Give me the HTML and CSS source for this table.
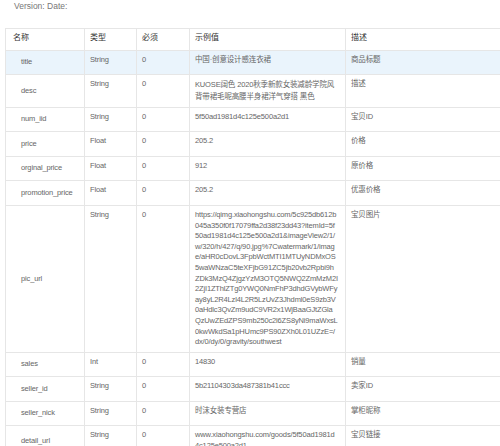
FILE: index.html
```html
<!DOCTYPE html>
<html lang="zh">
<head>
<meta charset="utf-8">
<title>API</title>
<link rel="stylesheet" href="styles.css">
</head>
<body>
<div class="version">Version: Date:</div>
<table class="api">
  <colgroup>
    <col class="c1"><col class="c2"><col class="c3"><col class="c4"><col class="c5">
  </colgroup>
  <thead>
    <tr><th class="first">名称</th><th>类型</th><th>必须</th><th>示例值</th><th>描述</th></tr>
  </thead>
  <tbody>
    <tr class="hl"><td class="name">title</td><td>String</td><td>0</td><td>中国·创意设计感连衣裙</td><td>商品标题</td></tr>
    <tr><td class="name">desc</td><td>String</td><td>0</td><td class="cjk">KUOSE阔色 2020秋季新款女装减龄学院风背带裙毛呢高腰半身裙洋气穿搭 黑色</td><td>描述</td></tr>
    <tr><td class="name">num_iid</td><td>String</td><td>0</td><td>5f50ad1981d4c125e500a2d1</td><td>宝贝ID</td></tr>
    <tr><td class="name">price</td><td>Float</td><td>0</td><td>205.2</td><td>价格</td></tr>
    <tr><td class="name">orginal_price</td><td>Float</td><td>0</td><td>912</td><td>原价格</td></tr>
    <tr><td class="name">promotion_price</td><td>Float</td><td>0</td><td>205.2</td><td>优惠价格</td></tr>
    <tr><td class="name">pic_url</td><td>String</td><td>0</td><td class="brk">https://qimg.xiaohongshu.com/5c925db612b045a350f0f17079ffa2d38f23dd43?itemId=5f50ad1981d4c125e500a2d1&amp;imageView2/1/w/320/h/427/q/90.jpg%7Cwatermark/1/image/aHR0cDovL3FpbWctMTI1MTUyNDMxOS5waWNzaC5teXFjbG91ZC5jb20vb2Rpbi9hZDk3MzQ4ZjgzYzM3OTQ5NWQ2ZmMzM2I2ZjI1ZThlZTg0YWQ0NmFhP3dhdGVybWFyay8yL2R4Lzl4L2R5LzUvZ3Jhdml0eS9zb3V0aHdlc3QvZm9udC9VR2x1WjBaaGJtZGlaQzUwZEdZPS9mb250c2l6ZS8yNi9maWxsL0kwWkdSa1pHUmc9PS90ZXh0L01UZzE=/dx/0/dy/0/gravity/southwest</td><td>宝贝图片</td></tr>
    <tr><td class="name">sales</td><td>Int</td><td>0</td><td>14830</td><td>销量</td></tr>
    <tr><td class="name">seller_id</td><td>String</td><td>0</td><td>5b21104303da487381b41ccc</td><td>卖家ID</td></tr>
    <tr><td class="name">seller_nick</td><td>String</td><td>0</td><td>时沫女装专营店</td><td>掌柜昵称</td></tr>
    <tr><td class="name">detail_url</td><td>String</td><td>0</td><td class="brk">www.xiaohongshu.com/goods/5f50ad1981d4c125e500a2d1</td><td>宝贝链接</td></tr>
  </tbody>
</table>
</body>
</html>
```
FILE: styles.css
```css
html, body {
  margin: 0;
  padding: 0;
  overflow: hidden;
  background: #fff;
}
body {
  font-family: "Liberation Sans", Arial, "Noto Sans CJK SC", sans-serif;
  color: #666;
}
.version {
  font-size: 8.5px;
  line-height: 12px;
  padding-left: 14px;
  color: #777;
}
.api {
  margin: 16px 0 0 5px;
  border-collapse: collapse;
  table-layout: fixed;
  width: 540px;
  font-size: 7.5px;
  letter-spacing: -0.15px;
  line-height: 10.6px;
}
.c1 { width: 79px; }
.c2 { width: 52px; }
.c3 { width: 53px; }
.c4 { width: 156px; }
.c5 { width: 200px; }
.api th, .api td {
  border: 1px solid #e6e6e6;
  text-align: left;
  vertical-align: top;
  font-weight: normal;
}
.api th {
  padding: 4px 5px 6px 5px;
  color: #333;
  font-size: 8px;
  letter-spacing: 0;
}
.api th.first { padding-left: 7px; }
.api td {
  padding: 4px 6.9px 4px 5px;
}
.api td.name {
  vertical-align: middle;
  padding: 6.5px 5px 6.5px 15px;
}
.api td.cjk { line-height: 11.7px; }
.api td.brk { word-break: break-all; }
.api tr.hl td { background: #eaf4fc; }
```
